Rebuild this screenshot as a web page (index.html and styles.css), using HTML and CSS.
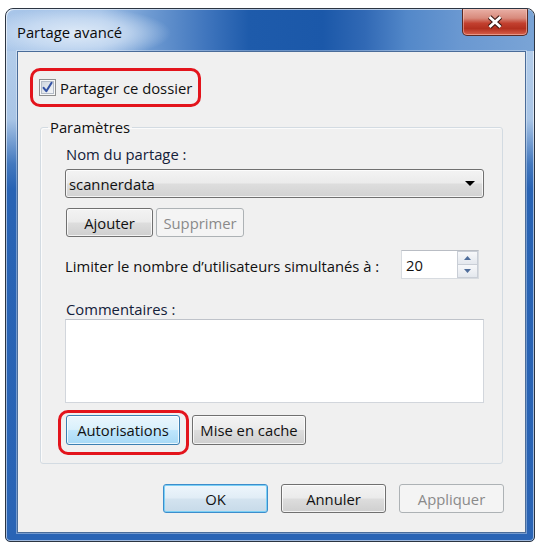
FILE: index.html
```html
<!DOCTYPE html>
<html lang="fr">
<head>
<meta charset="utf-8">
<title>Partage avancé</title>
<link rel="stylesheet" href="styles.css">
</head>
<body>
<div class="window">
  <div class="titlebar">
    <span class="title">Partage avancé</span>
    <div class="close" aria-label="Fermer">
      <svg width="16" height="14" viewBox="0 0 16 14">
        <path d="M2.5 2 L13.5 12 M13.5 2 L2.5 12" stroke="#3a1712" stroke-width="5" stroke-linecap="butt" fill="none"/>
        <path d="M2.5 2 L13.5 12 M13.5 2 L2.5 12" stroke="#ffffff" stroke-width="2.8" stroke-linecap="butt" fill="none"/>
      </svg>
    </div>
  </div>
  <div class="client">
    <label class="share-check">
      <span class="checkbox">
        <svg width="17" height="17" viewBox="0 0 17 17">
          <defs>
            <linearGradient id="cbg" x1="0" y1="0" x2="1" y2="1">
              <stop offset="0" stop-color="#cfd6df"/>
              <stop offset="1" stop-color="#f6f7f9"/>
            </linearGradient>
          </defs>
          <rect x="0.5" y="0.5" width="16" height="16" fill="#f7f7f7" stroke="#8e8f8f"/>
          <rect x="2.5" y="2.5" width="12" height="12" fill="url(#cbg)" stroke="#b4bcc8"/>
          <path d="M4.6 8.8 L7.3 12.2 L12.6 3.8" fill="none" stroke="#3553a4" stroke-width="2.1" stroke-linecap="round" stroke-linejoin="round"/>
        </svg>
      </span>
      <span class="check-text">Partager ce dossier</span>
    </label>

    <fieldset class="group">
      <legend>Paramètres</legend>
      <div class="group-body">
        <div class="label">Nom du partage :</div>
        <div class="combo">
          <span class="combo-text">scannerdata</span>
          <svg class="combo-arrow" width="10" height="5" viewBox="0 0 10 5"><path d="M0 0 H10 L5 5 Z" fill="#000"/></svg>
        </div>
        <div class="btn-row">
          <button class="btn btn-ajouter">Ajouter</button>
          <button class="btn btn-supprimer" disabled>Supprimer</button>
        </div>
        <div class="limit-row">
          <span class="limit-text">Limiter le nombre d’utilisateurs simultanés à :</span>
          <div class="spin">
            <span class="spin-val">20</span>
            <div class="spin-btns">
              <span class="spin-btn">
                <svg width="7" height="4" viewBox="0 0 7 4"><path d="M0 4 L3.5 0 L7 4 Z" fill="#4f6d9b"/></svg>
              </span>
              <span class="spin-btn">
                <svg width="7" height="4" viewBox="0 0 7 4"><path d="M0 0 L7 0 L3.5 4 Z" fill="#4f6d9b"/></svg>
              </span>
            </div>
          </div>
        </div>
        <div class="label comments-label">Commentaires :</div>
        <div class="textarea"></div>
        <div class="btn-row btn-row-wide">
          <span class="annot-wrap">
            <button class="btn btn-hot btn-autor">Autorisations</button>
            <span class="annot-ring"></span>
          </span>
          <button class="btn btn-cache">Mise en cache</button>
        </div>
      </div>
    </fieldset>

    <div class="dialog-buttons">
      <button class="btn btn-default btn-dlg">OK</button>
      <button class="btn btn-dlg">Annuler</button>
      <button class="btn btn-dlg" disabled>Appliquer</button>
    </div>
  </div>
</div>
</body>
</html>
```

FILE: styles.css
```css
html, body {
  margin: 0;
  padding: 0;
  background: #ffffff;
}

body {
  font-family: "Open Sans", "Noto Sans", sans-serif;
  font-size: 14.8px;
  line-height: 20px;
  color: #111111;
}

.window {
  box-sizing: border-box;
  margin: 8px 0 0 5px;
  width: 530px;
  height: 534px;
  border: 1px solid #2c3542;
  border-radius: 8px 8px 5px 5px;
  background: linear-gradient(to bottom, #b9d1ec 0px, #a9c5e6 110px, #4378be 155px, #2863b4 180px, #2a64b5 100%);
  box-shadow: inset 0 0 0 1px rgba(255, 255, 255, 0.55);
  display: flex;
  flex-direction: column;
  overflow: hidden;
}

.titlebar {
  height: 42px;
  flex: none;
  display: flex;
  justify-content: space-between;
  align-items: flex-start;
  border-radius: 7px 7px 0 0;
  background:
    radial-gradient(ellipse 95px 26px at 70px 24px, rgba(225, 236, 248, 0.95) 0%, rgba(210, 226, 245, 0.7) 55%, rgba(200, 220, 244, 0) 100%),
    linear-gradient(90deg, #a9c6e9 0%, #9fbfe6 18%, #6f9bd2 27%, #3f75bd 38%, #1e5bab 46%, #1b58a9 60%, #3169b5 68%, #5388c9 76%, #6a98d1 86%, #7aa4d6 100%);
  box-shadow: inset 1px 1px 0 rgba(255, 255, 255, 0.6);
}

.title {
  padding: 13px 0 0 11px;
  color: #0b0b0b;
}

.close {
  width: 66px;
  height: 27px;
  box-sizing: border-box;
  margin-right: 6px;
  border: 1px solid #5b2a24;
  border-top: none;
  border-radius: 0 0 5px 5px;
  background: linear-gradient(to bottom, #e9b0a6 0%, #d88a7c 35%, #c2402f 55%, #b3301f 75%, #d8614c 100%);
  box-shadow: inset 0 0 0 1px rgba(255, 220, 210, 0.45);
  display: flex;
  align-items: center;
  justify-content: center;
}

.client {
  flex: 1;
  margin: 0 8px 8px 11px;
  background: #f0f0f0;
  border: 1px solid #4a6c99;
  box-shadow: 0 0 0 1px rgba(255, 255, 255, 0.35);
}

.share-check {
  display: flex;
  align-items: center;
  width: max-content;
  height: 33px;
  margin: 16px 0 0 12px;
  padding: 0 6px 0 6px;
  border: 3px solid #e3141c;
  border-radius: 10px;
}

.checkbox {
  display: flex;
  width: 17px;
  height: 17px;
  margin-right: 4px;
}

.group {
  margin: 10px 22px 0 22px;
  padding: 0;
  border: 1px solid #d3dbe2;
  border-radius: 3px;
  box-shadow: inset 1px 1px 0 #fbfbfb;
  min-width: 0;
}

.group legend {
  margin-left: 7px;
  padding: 0 2px;
  line-height: 20px;
}

.group-body {
  padding: 7px 18px 18px 24px;
}

.label {
  padding-left: 1px;
  color: #14213a;
}

.combo {
  box-sizing: border-box;
  height: 29px;
  margin-top: 5px;
  display: flex;
  align-items: center;
  justify-content: space-between;
  padding: 0 8px 0 3px;
  border: 1px solid #707070;
  border-radius: 3px;
  background: linear-gradient(to bottom, #f3f3f3 0%, #ebebeb 48%, #dddddd 52%, #d2d2d2 100%);
  box-shadow: inset 0 0 0 1px rgba(255, 255, 255, 0.75);
}

.btn {
  font: inherit;
  color: #111111;
  box-sizing: border-box;
  height: 29px;
  padding: 0;
  border: 1px solid #707070;
  border-radius: 3px;
  background: linear-gradient(to bottom, #f3f3f3 0%, #ebebeb 48%, #dddddd 52%, #cfcfcf 100%);
  box-shadow: inset 0 0 0 1px rgba(255, 255, 255, 0.75);
}

.btn:disabled {
  color: #8a8a8a;
  border-color: #adb2b5;
  background: #f4f4f4;
  box-shadow: none;
}

.btn-hot {
  border-color: #3c7fb1;
  background: linear-gradient(to bottom, #eaf6fd 0%, #d9f0fc 48%, #bee6fd 52%, #a7d9f5 100%);
}

.btn-default {
  border-color: #3c8dcc;
  background: linear-gradient(to bottom, #eef6fc 0%, #e1edf6 48%, #d3e3ef 52%, #c7dae9 100%);
  box-shadow: inset 0 0 0 1px #7cd0f5;
}

.btn-row {
  display: flex;
  gap: 3px;
  margin-top: 10px;
  padding-left: 1px;
}

.btn-ajouter {
  width: 87px;
}

.btn-supprimer {
  width: 88px;
}

.limit-row {
  display: flex;
  align-items: center;
  margin-top: 13px;
}

.limit-text {
  padding-top: 2px;
}

.spin {
  box-sizing: border-box;
  display: flex;
  align-items: center;
  justify-content: space-between;
  width: 78px;
  height: 29px;
  margin: 0 5px 0 auto;
  padding-left: 4px;
  background: #ffffff;
  border: 1px solid #d7dbe0;
  border-top-color: #b9bdc4;
}

.spin-btns {
  display: flex;
  flex-direction: column;
  align-self: stretch;
  width: 21px;
}

.spin-btn {
  flex: 1;
  display: flex;
  align-items: center;
  justify-content: center;
  border: 1px solid #c9ced6;
  background: linear-gradient(to bottom, #f7f8fa, #e4e8ee);
}

.spin-btn + .spin-btn {
  border-top: none;
}

.comments-label {
  margin-top: 20px;
}

.textarea {
  height: 84px;
  box-sizing: border-box;
  background: #ffffff;
  border: 1px solid #d2d6dc;
  border-top-color: #bfc3ca;
}

.btn-row-wide {
  gap: 12px;
  margin-top: 12px;
}

.annot-wrap {
  position: relative;
  display: flex;
}

.btn-autor,
.btn-cache {
  width: 114px;
  height: 30px;
}

.annot-ring {
  position: absolute;
  top: -5px;
  left: -8px;
  right: -9px;
  bottom: -10px;
  border: 3px solid #e3141c;
  border-radius: 10px;
  pointer-events: none;
}

.dialog-buttons {
  display: flex;
  justify-content: flex-end;
  gap: 13px;
  margin-top: 20px;
  padding-right: 21px;
}

.btn-dlg {
  width: 105px;
}
```
